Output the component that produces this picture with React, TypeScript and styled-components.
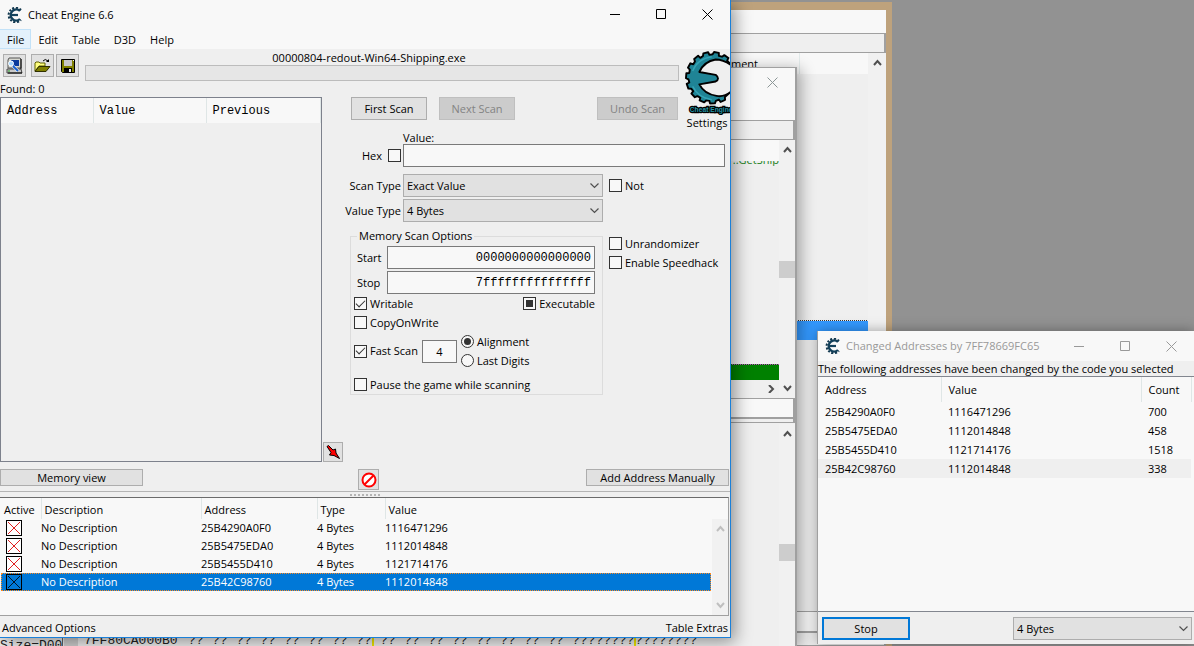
import React from "react";
import styled, { createGlobalStyle, css } from "styled-components";

const face = "#efefef";
const paper = "#f8f8f8";
const accent = "#0078d7";
const line = "#a0a0a0";
const mono = `"Liberation Mono", monospace`;

const GlobalStyle = createGlobalStyle`
  *, *::before, *::after { box-sizing: border-box; }
  body { margin: 0; background: #929292; }
  body, button, input, select {
    font: 11px/16px "Open Sans", "Segoe UI", sans-serif;
    color: #000;
  }
  button, input, select { margin: 0; padding: 0; border-radius: 0; outline: none; }
`;

const Desktop = styled.div`
  position: relative;
  min-height: 100vh;
  overflow: hidden;
  background: #929292;
`;

const Window = styled.section`
  position: absolute;
  display: flex;
  flex-direction: column;
  background: ${face};
`;

const BrowserWindow = styled(Window)`
  top: 2px;
  bottom: 0;
  left: 20%;
  right: 302px;
  padding: 8px 6px 0 0;
  background: #bea27c;
`;

const DebuggerWindow = styled(Window)`
  top: 67px;
  bottom: 0;
  left: 0;
  right: 397px;
  border-top: 1px solid ${line};
  border-right: 2px solid ${line};
  box-shadow: 4px 2px 14px rgba(0, 0, 0, 0.32);
`;

const MainWindow = styled(Window)`
  top: 0;
  left: 0;
  bottom: 8px;
  width: calc(100% - 463px);
  border-right: 1px solid #1a80d9;
  border-bottom: 1px solid #1a80d9;
  box-shadow: 4px 4px 16px rgba(0, 0, 0, 0.4);
`;

const ChangedWindow = styled(Window)`
  top: 331px;
  right: 0;
  bottom: 2px;
  width: 377px;
  border-left: 1px solid ${line};
  box-shadow: 0 0 12px rgba(0, 0, 0, 0.35);
`;

const TitleBar = styled.header<{ $dim?: boolean }>`
  display: flex;
  align-items: center;
  flex: none;
  height: ${(p) => (p.$dim ? 30 : 29)}px;
  padding-left: 7px;
  background: ${paper};
  color: ${(p) => (p.$dim ? "#999" : "#000")};
`;

const Title = styled.h1`
  flex: 1;
  margin: 0 0 0 5px;
  font-size: 11px;
  line-height: 16px;
  font-weight: 400;
`;

const Caption = styled.button<{ $dim?: boolean }>`
  display: flex;
  align-items: center;
  justify-content: center;
  width: 46px;
  height: 29px;
  border: 0;
  background: none;
  color: ${(p) => (p.$dim ? "#8c9696" : "inherit")};
`;

const MenuBar = styled.nav`
  display: flex;
  flex: none;
  height: 20px;
  background: ${paper};
`;

const MenuItem = styled.button<{ $active?: boolean }>`
  height: 20px;
  padding: 1px 6px 0 7px;
  border: 1px solid ${(p) => (p.$active ? "#c3e2f8" : "transparent")};
  border-left-width: 0;
  background: ${(p) => (p.$active ? "#e3f1fb" : "none")};
  line-height: 17px;
`;

const Upper = styled.main`
  flex: 1;
  display: grid;
  grid-template-columns: 322px 1fr 46px;
  grid-template-rows: 33px 15px 34px 1fr 26px;
`;

const ToolBar = styled.div`
  grid-column: 1 / 3;
  display: flex;
  gap: 6px;
  padding: 2px 5px 0 3px;
`;

const ToolGroup = styled.div`
  display: flex;
  gap: 2px;
  padding-top: 3px;
`;

const ToolButton = styled.button<{ $size?: number; $spaced?: boolean }>`
  display: flex;
  flex: none;
  align-items: center;
  justify-content: center;
  width: ${(p) => p.$size || 23}px;
  height: ${(p) => p.$size || 23}px;
  margin-right: ${(p) => (p.$spaced ? 3 : 0)}px;
  border: 1px solid #adadad;
  background: #e1e1e1;
`;

const Process = styled.div`
  flex: 1;
  display: flex;
  flex-direction: column;
  align-items: center;
`;

const ProcessName = styled.span`
  margin-right: 26px;
  line-height: 14px;
`;

const Progress = styled.div`
  align-self: stretch;
  height: 16px;
  border: 1px solid #bcbcbc;
  background: #e6e6e6;
`;

const Settings = styled.button`
  grid-column: 3;
  grid-row: 1 / 4;
  display: flex;
  flex-direction: column;
  align-items: center;
  justify-content: flex-start;
  padding-top: 1px;
  border: 0;
  background: none;
  overflow: hidden;
`;

const Found = styled.div`
  grid-column: 1;
  line-height: 14px;
`;

const FoundList = styled.div`
  grid-column: 1;
  grid-row: 3 / 5;
  margin-bottom: 4px;
  border: 1px solid #7d818c;
`;

const DataTable = styled.table`
  width: 100%;
  table-layout: fixed;
  border-collapse: collapse;
  text-align: left;
  th, td { padding: 0; font-weight: 400; white-space: nowrap; }
`;

const FoundTable = styled(DataTable)`
  font-family: ${mono};
  font-size: 12px;
  th {
    height: 25px;
    padding-left: 6px;
    background: ${paper};
    border-right: 1px solid #dfe6e6;
  }
`;

const ScanButtons = styled.div`
  grid-column: 2;
  grid-row: 3;
  display: flex;
  gap: 12px;
  padding: 0 6px 0 29px;
`;

const PushButton = styled.button<{ $width: number; $height?: number; $push?: boolean }>`
  flex: none;
  width: ${(p) => p.$width}px;
  height: ${(p) => p.$height || 23}px;
  margin-left: ${(p) => (p.$push ? "auto" : "0")};
  border: 1px solid #adadad;
  background: #e1e1e1;
  line-height: 14px;
  &:disabled { background: #cccccc; border-color: #bfbfbf; color: #838383; }
`;

const ScanForm = styled.form`
  grid-column: 2 / 4;
  grid-row: 4;
  position: relative;
`;

const Fields = styled.div`
  display: grid;
  grid-template-columns: 79px 200px 1fr;
  column-gap: 2px;
  padding-right: 5px;
  align-items: center;
`;

const TypeFields = styled(Fields)`
  margin-top: 7px;
  row-gap: 2px;
`;

const RightLabel = styled.label`
  justify-self: end;
  display: flex;
  align-items: center;
  gap: 6px;
  white-space: nowrap;
`;

const ValueLabel = styled.label`
  grid-column: 2 / 4;
  line-height: 13px;
`;

const TextBox = styled.input<{ $mono?: boolean; $center?: boolean }>`
  min-width: 0;
  width: 100%;
  height: 23px;
  padding: 0 3px;
  border: 1px solid #7a7a7a;
  background: ${paper};
  ${(p) => p.$mono && css`font-family: ${mono}; font-size: 12px; text-align: right;`}
  ${(p) => p.$center && css`text-align: center; width: 35px;`}
`;

const WideTextBox = styled(TextBox)`
  grid-column: 2 / 4;
`;

const SelectWrap = styled.span<{ $width?: string }>`
  position: relative;
  display: block;
  width: ${(p) => p.$width || "100%"};
  svg { position: absolute; right: 4px; top: 8px; pointer-events: none; }
`;

const Select = styled.select`
  appearance: none;
  display: block;
  width: 100%;
  height: 23px;
  padding: 0 20px 0 3px;
  border: 1px solid #adadad;
  background: #e1e1e1;
`;

const CheckLabel = styled.label`
  display: flex;
  align-items: center;
  gap: 3px;
  height: 19px;
  white-space: nowrap;
`;

const NotLabel = styled(CheckLabel)`
  padding-left: 4px;
`;

const Tick = styled.input<{ $mixed?: boolean }>`
  appearance: none;
  flex: none;
  display: grid;
  place-items: center;
  width: 13px;
  height: 13px;
  border: 1px solid #333;
  background: ${paper};
  &[type="radio"] { border-radius: 50%; }
  &[type="radio"]:checked::before {
    content: "";
    width: 7px;
    height: 7px;
    border-radius: 50%;
    background: #333;
  }
  &[type="checkbox"]:checked::before {
    content: "";
    width: 9px;
    height: 5px;
    margin-bottom: 3px;
    border: solid #333;
    border-width: 0 0 1px 1px;
    transform: rotate(-45deg);
    ${(p) => p.$mixed && css`
      width: 7px;
      height: 7px;
      margin: 0;
      border: 0;
      background: #333;
      transform: none;
    `}
  }
`;

const Options = styled.div`
  display: flex;
  align-items: flex-start;
  gap: 6px;
  padding: 6px 0 0 28px;
`;

const Extras = styled.div`
  padding-top: 6px;
`;

const Group = styled.fieldset`
  flex: none;
  width: 253px;
  height: 167px;
  min-width: 0;
  margin: 0;
  padding: 2px 7px 0 3px;
  border: 1px solid #dcdcdc;
`;

const Legend = styled.legend`
  margin-left: 3px;
  padding: 0 2px;
  line-height: 16px;
`;

const RangeRow = styled.label`
  display: grid;
  grid-template-columns: 30px 1fr;
  padding-left: 3px;
  align-items: center;
  & + & { margin-top: 2px; }
`;

const Split = styled.div`
  display: flex;
  justify-content: space-between;
`;

const FastRow = styled.div`
  display: flex;
  align-items: center;
  gap: 4px;
  margin-bottom: 5px;
`;

const Pointer = styled(ToolButton)`
  position: absolute;
  left: 1px;
  bottom: 4px;
`;

const LowerBar = styled.div`
  grid-column: 1 / 4;
  grid-row: 5;
  display: grid;
  grid-template-columns: 358px auto 1fr;
  padding: 3px 1px 0 0;
  border-bottom: 1px solid #b4b4b4;
`;

const Grip = styled.div`
  flex: none;
  height: 5px;
  display: flex;
  justify-content: center;
  align-items: center;
  &::before { content: ""; width: 30px; border-top: 2px dotted #b4b4b4; }
`;

const TablePane = styled.div`
  display: flex;
  flex: none;
  height: 119px;
  margin-right: 1px;
  border: solid #6b6b6b;
  border-width: 1px 1px 1px 0;
  border-right-color: ${line};
  border-bottom-color: ${line};
  background: ${paper};
`;

const CheatTable = styled(DataTable)`
  margin: 0 1px;
  align-self: flex-start;
  flex: 1;
  th { height: 21px; padding: 3px 0 0 3px; border-right: 1px solid #dfe6e6; line-height: 14px; }
  th:last-child { border-right: 0; }
  td { height: 18px; line-height: 18px; }
`;

const CheatRow = styled.tr<{ $selected?: boolean }>`
  ${(p) => p.$selected && css`
    background: ${accent};
    color: #fff;
    outline: 1px dotted #ff8a20;
    outline-offset: -1px;
  `}
`;

const ActiveBox = styled.button<{ $selected?: boolean }>`
  display: block;
  width: 16px;
  height: 16px;
  margin: 1px 0 1px 5px;
  border: 1px solid #000;
  background: ${(p) => (p.$selected ? "none" : "#fff")};
  color: ${(p) => (p.$selected ? "#001428" : "#e02020")};
  svg { display: block; }
`;

const ScrollBar = styled.div<{ $width?: number; $top?: number }>`
  flex: none;
  display: flex;
  flex-direction: column;
  justify-content: space-between;
  align-items: center;
  width: ${(p) => p.$width || 16}px;
  margin-top: ${(p) => p.$top || 0}px;
  padding: 6px 0;
  background: #f1f1f1;
`;

const Thumb = styled.div<{ $below?: number }>`
  align-self: stretch;
  height: 17px;
  margin-bottom: ${(p) => p.$below || 0}px;
  background: #cdcdcd;
`;

const StatusBar = styled.footer`
  display: flex;
  justify-content: space-between;
  align-items: flex-end;
  flex: none;
  height: 21px;
  padding: 0 2px 1px;
  background: ${face};
`;

const TextButton = styled.button`
  border: 0;
  background: none;
  line-height: 16px;
`;

const Message = styled.p`
  flex: none;
  height: 15px;
  margin: 0;
  line-height: 15px;
  white-space: nowrap;
`;

const ChangedPane = styled.div`
  flex: 1;
  border: solid #82868f;
  border-width: 1px 0;
  background: ${paper};
`;

const ChangedTable = styled(DataTable)`
  th { height: 25px; padding: 0 0 0 7px; border-right: 1px solid #dfe6e6; }
  td { height: 19px; padding-left: 7px; line-height: 18px; }
  tr:last-child td { background: #efefef; }
`;

const ChangedFooter = styled.footer`
  display: flex;
  flex: none;
  align-items: center;
  justify-content: space-between;
  height: 32px;
  padding: 1px 2px 0 4px;
`;

const StopButton = styled(PushButton)`
  border: 2px solid ${accent};
`;

const Strip = styled.div<{ $height: number; $bg?: string; $grow?: boolean }>`
  display: flex;
  flex: ${(p) => (p.$grow ? "1 1" : "0 0")} ${(p) => p.$height}px;
  justify-content: flex-end;
  background: ${(p) => p.$bg || face};
`;

const EdgedStrip = styled(Strip)`
  border: solid ${line};
  border-width: 1px 2px 1px 0;
`;

const ListColumn = styled.div`
  flex: 1;
  display: flex;
  flex-direction: column;
`;

const ListHeader = styled.div`
  display: flex;
  justify-content: flex-end;
  height: 21px;
  padding-right: 68px;
  background: ${paper};
`;

const HeaderText = styled.span`
  width: 69px;
  padding-top: 3px;
  border-right: 1px solid #e3ebeb;
  line-height: 16px;
`;

const BlueRow = styled.div`
  height: 19px;
  margin-top: auto;
  background: #3399ff;
  outline: 1px dotted #333;
`;

const Code = styled.div`
  flex: 1;
  display: flex;
  flex-direction: column;
  justify-content: space-between;
  text-align: right;
`;

const CodeHead = styled.div`
  position: relative;
  height: 26px;
  overflow: hidden;
  padding-top: 14px;
  color: #1a7f1a;
  line-height: 12px;
  &::before {
    content: "";
    position: absolute;
    inset: 0 0 auto;
    height: 21px;
    background: ${paper};
  }
`;

const GreenRow = styled.div`
  height: 16px;
  border-top: 1px dotted #c040c0;
  background: #008000;
`;

const CodeFoot = styled.div`
  height: 18px;
  padding: 1px 4px 0 0;
`;

const HexPane = styled.div`
  flex: 1;
  display: flex;
  flex-direction: column;
  justify-content: flex-end;
`;

const HexLine = styled.div`
  display: grid;
  grid-template-columns: 64px 20px 104px repeat(16, 24px) 63px 1fr;
  justify-items: start;
  height: 13px;
  font: 13px/16px ${mono};
  color: #222;
  white-space: nowrap;
  overflow: hidden;
`;

const SizeCell = styled.span`
  border-right: 1px solid #666;
  line-height: 26px;
`;

const GrayCell = styled.span`
  justify-self: stretch;
  background: #cfcfcf;
  border-right: 6px solid ${face};
`;

const Byte = styled.span<{ $mark?: boolean }>`
  border-right: 2px solid ${(p) => (p.$mark ? "#f0e800" : "transparent")};
`;

/** Toothed crescent, open to the right, with a centre prong. */
function gearPath() {
  const cx = 28;
  const cy = 29;
  const pts: string[] = [];
  const steps = 11;
  const at = (deg: number, r: number) => {
    const a = (deg * Math.PI) / 180;
    pts.push(`${(cx + r * Math.cos(a)).toFixed(1)} ${(cy + r * Math.sin(a)).toFixed(1)}`);
  };
  for (let i = 0; i < steps; i++) {
    const base = -48 - i * 24;
    at(base, 24);
    at(base - 2, 27);
    at(base - 13, 27);
    at(base - 16, 24.5);
  }
  return `M52 19 L${pts.join(" L")} L52 40 Q43 50 33 48 Q20 46 15 36 L32 33 Q37 30 32 26 L15 23 Q20 12 32 10 Q42 10 52 19Z`;
}
const GEAR = gearPath();

const AppIcon = () => (
  <svg width="16" height="16" viewBox="0 0 16 16" aria-hidden="true">
    <path d="M13 4A5.500 5.500 0 1 0 13 12" fill="none" stroke="#12405a" strokeWidth="2.4" />
    <path d="M14 3A7.200 7.200 0 1 0 14 13" fill="none" stroke="#12384f" strokeWidth="2" strokeDasharray="2 1.6" />
    <path d="M3 8h8" stroke="#12405a" strokeWidth="2.2" />
  </svg>
);

const Logo = () => (
  <svg width="46" height="68" viewBox="0 0 46 68" aria-hidden="true">
    <path d={GEAR} fill="#1f8496" stroke="#000" strokeWidth="2" strokeLinejoin="round" />
    <path d="M8 22 Q13 9 28 7 M8 38 Q14 50 28 52" fill="none" stroke="#34a4b6" strokeWidth="1.5" />
    <text x="5" y="65" fontSize="7" fontWeight="700" fontFamily="Liberation Sans, sans-serif"
      fill="#2395a6" stroke="#000" strokeWidth="2.5" paintOrder="stroke">Cheat Engine</text>
  </svg>
);

const Minimize = () => <svg width="11" height="11"><path d="M0 5.5h10" stroke="currentColor" /></svg>;
const Maximize = () => <svg width="11" height="11"><path d="M.5.5h9v9h-9z" fill="none" stroke="currentColor" /></svg>;
const Close = () => <svg width="11" height="11"><path d="M.5.5l10 10M10.5.5l-10 10" fill="none" stroke="currentColor" /></svg>;

const angles = { up: "M1 6l3.5-4L8 6", down: "M1 2l3.5 4L8 2", right: "M3 0l4 4-4 4" };
const Angle = ({ dir, color = "#505050" }: { dir: keyof typeof angles; color?: string }) => (
  <svg width="9" height="8" viewBox="0 0 9 8" aria-hidden="true">
    <path d={angles[dir]} fill="none" stroke={color} strokeWidth="2" />
  </svg>
);
const SelectAngle = () => (
  <svg width="9" height="8" viewBox="0 0 9 8" aria-hidden="true">
    <path d="M.5 1.5l4 4 4-4" fill="none" stroke="#505050" strokeWidth="1.2" />
  </svg>
);

const ComputerIcon = () => (
  <svg width="17" height="17" viewBox="0 0 17 17" aria-hidden="true">
    <path d="M3 1h11l1 1v9H2V3z" fill="#d8d8d0" stroke="#555" />
    <path d="M5 3h8v6H5z" fill="#0a3a9c" />
    <path d="M1 12h14l1 4H1z" fill="#c8c8c8" stroke="#444" />
    <path d="M15 2v10M2 16h14" stroke="#000" />
    <circle cx="5" cy="6.5" r="2.5" fill="#a8d8ff" stroke="#fff" />
    <path d="M7 9l5 5" stroke="#fff" strokeWidth="3" />
    <path d="M7 9l5 5" stroke="#1560d0" strokeWidth="2" />
    <path d="M2 14h2" stroke="#20a020" />
  </svg>
);

const OpenIcon = () => (
  <svg width="17" height="15" viewBox="0 0 17 15" aria-hidden="true">
    <path d="M1 13V5l1-1h3l1 1h5v3H5z" fill="#ffff80" stroke="#606000" />
    <path d="M1 13.5L5 8.5h11l-4 5z" fill="#808000" stroke="#303000" />
    <path d="M9 3q2-3 5 0" fill="none" stroke="#000" />
    <path d="M12 4h3V1z" fill="#000" />
  </svg>
);

const SaveIcon = () => (
  <svg width="14" height="14" viewBox="0 0 14 14" aria-hidden="true">
    <path d="M.5.5h13v13h-12l-1-1z" fill="#808000" stroke="#000" />
    <path d="M3 1h8v6H3z" fill="#c8c8c8" />
    <path d="M3 9h8v5H3z" fill="#000" />
    <path d="M8 10h2v3H8z" fill="#e8e8e8" />
    <path d="M12 1.5h1" stroke="#fff" />
  </svg>
);

const RedArrow = () => (
  <svg width="14" height="14" viewBox="0 0 14 14" aria-hidden="true">
    <path d="M1 1.5L2.5.5 7 5l2.5-1 .5 4 3.5 5.5L8 10.5 3.5 10 5 7.5z" fill="#f00" stroke="#000" />
  </svg>
);

const NoEntry = () => (
  <svg width="16" height="16" viewBox="0 0 16 16" aria-hidden="true">
    <circle cx="8" cy="8" r="6.5" fill="#fff" stroke="#f00" strokeWidth="2" />
    <path d="M3.5 12.5l9-9" stroke="#f00" strokeWidth="2" />
  </svg>
);

const Cross = () => (
  <svg width="14" height="14" viewBox="0 0 14 14" aria-hidden="true">
    <path d="M1 1l12 12M13 1L1 13" stroke="currentColor" />
  </svg>
);

const Captions = () => (
  <>
    <Caption aria-label="Minimize"><Minimize /></Caption>
    <Caption aria-label="Maximize"><Maximize /></Caption>
    <Caption aria-label="Close"><Close /></Caption>
  </>
);

const Dropdown = ({ id, value, width }: { id: string; value: string; width?: string }) => (
  <SelectWrap $width={width}>
    <Select id={id} aria-label={id}><option>{value}</option></Select>
    <SelectAngle />
  </SelectWrap>
);

const entries = [
  { address: "25B4290A0F0", value: "1116471296", count: 700 },
  { address: "25B5475EDA0", value: "1112014848", count: 458 },
  { address: "25B5455D410", value: "1121714176", count: 1518 },
  { address: "25B42C98760", value: "1112014848", count: 338 },
];

const Columns = ({ widths }: { widths: (number | undefined)[] }) => (
  <colgroup>{widths.map((w, i) => <col key={i} width={w} />)}</colgroup>
);

function Background() {
  return (
    <>
      <BrowserWindow>
        <Strip $height={23} $bg={paper} />
        <EdgedStrip $height={20} />
        <Strip $height={287}>
          <ListColumn>
            <ListHeader><HeaderText>ment</HeaderText></ListHeader>
            <BlueRow />
          </ListColumn>
          <ScrollBar $width={18}><Angle dir="up" /></ScrollBar>
        </Strip>
        <Strip $height={200} $grow />
        <EdgedStrip $height={21} $bg={paper} />
        <EdgedStrip $height={14} />
      </BrowserWindow>
      <DebuggerWindow>
        <Strip $height={52} $bg={paper}>
          <Caption $dim aria-label="Close"><Close /></Caption>
        </Strip>
        <EdgedStrip $height={20} />
        <Strip $height={258}>
          <Code>
            <CodeHead>..GetShip</CodeHead>
            <div>
              <GreenRow />
              <CodeFoot><Angle dir="right" /></CodeFoot>
            </div>
          </Code>
          <ScrollBar><Angle dir="up" /><Thumb /><Angle dir="down" /></ScrollBar>
        </Strip>
        <EdgedStrip $height={20} $bg={paper} />
        <EdgedStrip $height={5} />
        <Strip $height={100} $grow>
          <HexPane>
            <HexLine>
              <SizeCell>Size=D00</SizeCell>
              <GrayCell />
              <span>7FF80CA000B0</span>
              {Array.from({ length: 16 }, (_, i) => <Byte key={i} $mark={i === 7}>??</Byte>)}
              <Byte $mark>????????</Byte>
              <Byte>????????</Byte>
            </HexLine>
          </HexPane>
          <ScrollBar $top={1}><Angle dir="up" /><Thumb $below={79} /></ScrollBar>
        </Strip>
      </DebuggerWindow>
    </>
  );
}

function CheatEngine() {
  return (
    <MainWindow>
      <TitleBar><AppIcon /><Title>Cheat Engine 6.6</Title><Captions /></TitleBar>
      <MenuBar>
        {["File", "Edit", "Table", "D3D", "Help"].map((m) => (
          <MenuItem key={m} $active={m === "File"}>{m}</MenuItem>
        ))}
      </MenuBar>
      <Upper>
        <ToolBar>
          <ToolGroup>
            <ToolButton $spaced aria-label="Open process"><ComputerIcon /></ToolButton>
            <ToolButton aria-label="Load"><OpenIcon /></ToolButton>
            <ToolButton aria-label="Save"><SaveIcon /></ToolButton>
          </ToolGroup>
          <Process>
            <ProcessName>00000804-redout-Win64-Shipping.exe</ProcessName>
            <Progress role="progressbar" aria-label="Scan progress" />
          </Process>
        </ToolBar>
        <Settings><Logo /><span>Settings</span></Settings>
        <Found>Found: 0</Found>
        <FoundList>
          <FoundTable>
            <Columns widths={[92, 113, undefined]} />
            <thead><tr><th>Address</th><th>Value</th><th>Previous</th></tr></thead>
          </FoundTable>
        </FoundList>
        <ScanButtons>
          <PushButton $width={76}>First Scan</PushButton>
          <PushButton $width={76} disabled>Next Scan</PushButton>
          <PushButton $width={81} $push disabled>Undo Scan</PushButton>
        </ScanButtons>
        <ScanForm onSubmit={(e: React.FormEvent) => e.preventDefault()}>
          <Fields>
            <ValueLabel htmlFor="value">Value:</ValueLabel>
            <RightLabel>Hex <Tick type="checkbox" /></RightLabel>
            <WideTextBox id="value" />
          </Fields>
          <TypeFields>
            <RightLabel htmlFor="scan-type">Scan Type</RightLabel>
            <Dropdown id="scan-type" value="Exact Value" />
            <NotLabel><Tick type="checkbox" />Not</NotLabel>
            <RightLabel htmlFor="value-type">Value Type</RightLabel>
            <Dropdown id="value-type" value="4 Bytes" />
          </TypeFields>
          <Options>
            <Group>
              <Legend>Memory Scan Options</Legend>
              <RangeRow>Start<TextBox $mono defaultValue="0000000000000000" /></RangeRow>
              <RangeRow>Stop<TextBox $mono defaultValue="7fffffffffffffff" /></RangeRow>
              <Split>
                <CheckLabel><Tick type="checkbox" defaultChecked />Writable</CheckLabel>
                <CheckLabel><Tick type="checkbox" defaultChecked $mixed />Executable</CheckLabel>
              </Split>
              <CheckLabel><Tick type="checkbox" />CopyOnWrite</CheckLabel>
              <FastRow>
                <CheckLabel><Tick type="checkbox" defaultChecked />Fast Scan</CheckLabel>
                <TextBox $center aria-label="Alignment value" defaultValue="4" />
                <div>
                  <CheckLabel><Tick type="radio" name="align" defaultChecked />Alignment</CheckLabel>
                  <CheckLabel><Tick type="radio" name="align" />Last Digits</CheckLabel>
                </div>
              </FastRow>
              <CheckLabel><Tick type="checkbox" />Pause the game while scanning</CheckLabel>
            </Group>
            <Extras>
              <CheckLabel><Tick type="checkbox" />Unrandomizer</CheckLabel>
              <CheckLabel><Tick type="checkbox" />Enable Speedhack</CheckLabel>
            </Extras>
          </Options>
          <Pointer $size={20} type="button" aria-label="Add selected"><RedArrow /></Pointer>
        </ScanForm>
        <LowerBar>
          <PushButton $width={143} $height={17}>Memory view</PushButton>
          <ToolButton $size={21} aria-label="Clear list"><NoEntry /></ToolButton>
          <PushButton $width={143} $height={17} $push>Add Address Manually</PushButton>
        </LowerBar>
      </Upper>
      <Grip />
      <TablePane>
        <CheatTable>
          <Columns widths={[40, 160, 116, 68, undefined]} />
          <thead>
            <tr><th>Active</th><th>Description</th><th>Address</th><th>Type</th><th>Value</th></tr>
          </thead>
          <tbody>
            {entries.map((e, i) => (
              <CheatRow key={e.address} $selected={i === 3}>
                <td><ActiveBox $selected={i === 3} aria-label="Active"><Cross /></ActiveBox></td>
                <td>No Description</td>
                <td>{e.address}</td>
                <td>4 Bytes</td>
                <td>{e.value}</td>
              </CheatRow>
            ))}
          </tbody>
        </CheatTable>
        <ScrollBar $top={21}><Angle dir="up" color="#bfbfbf" /><Angle dir="down" color="#bfbfbf" /></ScrollBar>
      </TablePane>
      <StatusBar>
        <TextButton>Advanced Options</TextButton>
        <TextButton>Table Extras</TextButton>
      </StatusBar>
    </MainWindow>
  );
}

function ChangedAddresses() {
  return (
    <ChangedWindow>
      <TitleBar $dim><AppIcon /><Title>Changed Addresses by 7FF78669FC65</Title><Captions /></TitleBar>
      <Message>The following addresses have been changed by the code you selected</Message>
      <ChangedPane>
        <ChangedTable>
          <Columns widths={[123, 200, 50, undefined]} />
          <thead><tr><th>Address</th><th>Value</th><th>Count</th></tr></thead>
          <tbody>
            {entries.map((e) => (
              <tr key={e.address}><td>{e.address}</td><td>{e.value}</td><td>{e.count}</td></tr>
            ))}
          </tbody>
        </ChangedTable>
      </ChangedPane>
      <ChangedFooter>
        <StopButton $width={88}>Stop</StopButton>
        <Dropdown id="display-type" value="4 Bytes" width="179px" />
      </ChangedFooter>
    </ChangedWindow>
  );
}

export default function App() {
  return (
    <>
      <GlobalStyle />
      <Desktop>
        <Background />
        <CheatEngine />
        <ChangedAddresses />
      </Desktop>
    </>
  );
}
